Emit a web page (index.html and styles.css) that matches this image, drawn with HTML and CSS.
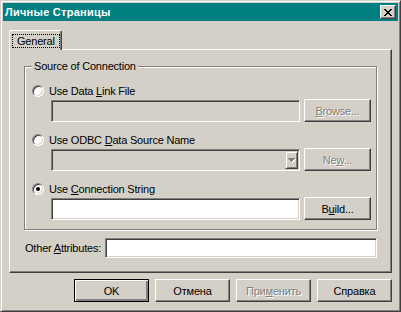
FILE: index.html
```html
<!DOCTYPE html>
<html lang="ru">
<head>
    <meta charset="UTF-8">
    <title>Личные Страницы</title>
    <link rel="stylesheet" href="styles.css">
</head>
<body>
    <div class="window">
        <div class="titlebar">
            <span class="title">Личные Страницы</span>
            <button class="close-btn" type="button">
                <svg width="8" height="7" viewBox="0 0 8 7" shape-rendering="crispEdges">
                    <path fill="#000" d="M0 0h2v1H0zM6 0h2v1H6zM1 1h2v1H1zM5 1h2v1H5zM2 2h4v1H2zM3 3h2v1H3zM2 4h4v1H2zM1 5h2v1H1zM5 5h2v1H5zM0 6h2v1H0zM6 6h2v1H6z"/>
                </svg>
            </button>
        </div>

        <div class="dialog-body">
            <div class="tabs">
                <div class="tab active"><span class="focus">General</span></div>
            </div>

            <div class="tab-page">
                <fieldset class="group">
                    <legend>Source of Connection</legend>

                    <div class="option">
                        <div class="radio-row"><span class="radio"></span><span>Use Data <u>L</u>ink File</span></div>
                        <div class="field-row">
                            <div class="textbox disabled"></div>
                            <button class="btn" type="button" disabled><u>B</u>rowse...</button>
                        </div>
                    </div>

                    <div class="option">
                        <div class="radio-row"><span class="radio"></span><span>Use ODBC <u>D</u>ata Source Name</span></div>
                        <div class="field-row">
                            <div class="textbox disabled combo">
                                <span class="drop-btn">
                                    <svg width="8" height="5" viewBox="0 0 8 5" shape-rendering="crispEdges">
                                        <path fill="#fff" d="M1 1h7v1H1zM2 2h5v1H2zM3 3h3v1H3zM4 4h1v1H4z"/>
                                        <path fill="#808080" d="M0 0h7v1H0zM1 1h5v1H1zM2 2h3v1H2zM3 3h1v1H3z"/>
                                    </svg>
                                </span>
                            </div>
                            <button class="btn" type="button" disabled>Ne<u>w</u>...</button>
                        </div>
                    </div>

                    <div class="option">
                        <div class="radio-row"><span class="radio checked"></span><span>Use <u>C</u>onnection String</span></div>
                        <div class="field-row">
                            <div class="textbox"></div>
                            <button class="btn" type="button">B<u>u</u>ild...</button>
                        </div>
                    </div>
                </fieldset>

                <div class="attr-row">
                    <label>Other <u>A</u>ttributes:</label>
                    <div class="textbox"></div>
                </div>
            </div>

            <div class="actions">
                <button class="btn default" type="button">OK</button>
                <button class="btn" type="button">Отмена</button>
                <button class="btn" type="button" disabled>При<u>м</u>енить</button>
                <button class="btn" type="button">Справка</button>
            </div>
        </div>
    </div>
</body>
</html>
```

FILE: styles.css
```css
/* Reset basic styles */
* {
    margin: 0;
    padding: 0;
    box-sizing: border-box;
}

body {
    font-family: "Liberation Sans", Arial, sans-serif;
    font-size: 11px;
    letter-spacing: -0.2px;
    color: #000;
    background: #d4d0c8;
}

/* Window frame */
.window {
    width: 401px;
    height: 312px;
    display: flex;
    flex-direction: column;
    background: #d4d0c8;
    border: 1px solid;
    border-color: #d4d0c8 #404040 #404040 #d4d0c8;
    box-shadow: inset 1px 1px #fff, inset -1px -1px #808080;
    padding: 2px;
}

.titlebar {
    height: 18px;
    display: flex;
    align-items: center;
    justify-content: space-between;
    background: #008080;
    padding: 0 2px;
}

.title {
    color: #fff;
    font-weight: bold;
    font-size: 11px;
    letter-spacing: 0.25px;
}

.close-btn {
    width: 16px;
    height: 14px;
    display: flex;
    align-items: center;
    justify-content: center;
    background: #d4d0c8;
    border: 1px solid;
    border-color: #fff #404040 #404040 #fff;
    box-shadow: inset -1px -1px #808080;
}

.dialog-body {
    flex: 1;
    display: flex;
    flex-direction: column;
    padding: 9px 6px 0 6px;
}

/* Tabs */
.tabs {
    display: flex;
}

.tab {
    position: relative;
    z-index: 1;
    height: 20px;
    margin-bottom: -1px;
    padding: 3px 1px 2px 2px;
    background: #d4d0c8;
    border: 1px solid;
    border-color: #fff #404040 transparent #fff;
    border-bottom: 0;
    border-radius: 2px 2px 0 0;
    box-shadow: inset -1px 0 #808080;
}

.tab .focus {
    display: block;
    height: 14px;
    line-height: 12px;
    padding: 0 4px;
    border: 1px dotted #000;
}

.tab-page {
    height: 224px;
    padding: 10px 14px 13px 14px;
    border: 1px solid;
    border-color: #fff #404040 #404040 #fff;
    box-shadow: inset -1px -1px #808080;
}

/* Group box */
.group {
    min-width: 0;
    border: 1px solid #808080;
    box-shadow: inset 1px 1px #fff, 1px 1px #fff;
    padding: 11px 5px 9px 7px;
}

.group legend {
    padding: 0 2px;
    line-height: 13px;
    background: #d4d0c8;
}

.option + .option {
    margin-top: 11px;
}

.radio-row {
    height: 14px;
    display: flex;
    align-items: center;
}

.radio {
    position: relative;
    width: 12px;
    height: 12px;
    margin-right: 5px;
    border-radius: 50%;
    background: #fff;
    border: 1px solid;
    border-color: #808080 #fff #fff #808080;
    box-shadow: inset 1px 1px #404040, inset -1px -1px #d4d0c8;
}

.radio.checked::after {
    content: "";
    position: absolute;
    left: 3px;
    top: 3px;
    width: 4px;
    height: 4px;
    border-radius: 50%;
    background: #000;
}

.field-row {
    display: flex;
    align-items: flex-end;
    gap: 4px;
    margin: 1px 0 0 19px;
}

.field-row .textbox {
    flex: 1;
    height: 22px;
}

.field-row .btn {
    width: 67px;
}

/* Inputs */
.textbox {
    background: #fff;
    border: 1px solid;
    border-color: #808080 #fff #fff #808080;
    box-shadow: inset 1px 1px #404040, inset -1px -1px #d4d0c8;
}

.textbox.disabled {
    background: #d4d0c8;
}

.combo {
    display: flex;
    justify-content: flex-end;
    padding: 1px;
}

.drop-btn {
    width: 13px;
    display: flex;
    align-items: center;
    justify-content: center;
    background: #d4d0c8;
    border: 1px solid;
    border-color: #d4d0c8 #404040 #404040 #d4d0c8;
    box-shadow: inset 1px 1px #fff, inset -1px -1px #808080;
}

.attr-row {
    display: flex;
    align-items: center;
    margin-top: 8px;
}

.attr-row label {
    width: 81px;
    padding-left: 1px;
}

.attr-row .textbox {
    flex: 1;
    height: 20px;
}

/* Buttons */
.btn {
    height: 23px;
    font-family: inherit;
    font-size: 11px;
    font-weight: normal;
    letter-spacing: inherit;
    color: #000;
    background: #d4d0c8;
    border: 1px solid;
    border-color: #fff #404040 #404040 #fff;
    box-shadow: inset -1px -1px #808080;
}

.btn:disabled {
    color: #808080;
    text-shadow: 1px 1px #fff;
}

.actions {
    display: flex;
    justify-content: flex-end;
    gap: 6px;
    margin-top: 6px;
}

.actions .btn {
    width: 75px;
}

.actions .btn.default {
    border-color: #000;
    box-shadow: inset 1px 1px #fff, inset -2px -2px #808080;
}
```
